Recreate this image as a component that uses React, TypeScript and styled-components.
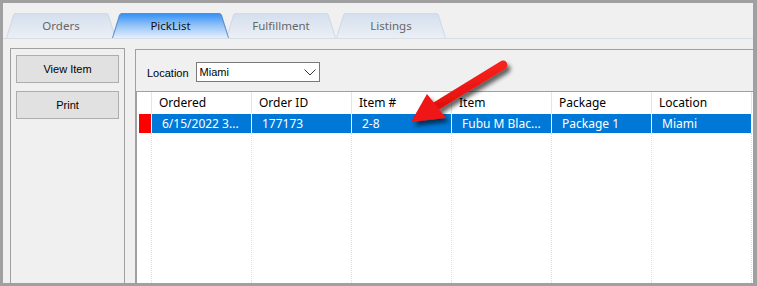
import React from "react";
import styled, { createGlobalStyle } from "styled-components";

const GlobalStyle = createGlobalStyle`
  html, body {
    margin: 0;
    padding: 0;
    background: #ffffff;
  }
  body {
    font-family: "Noto Sans", "Liberation Sans", sans-serif;
    font-size: 12px;
    color: #000;
  }
`;

// WinForms controls use the classic sans, the grid and tabs the newer UI face
const formFont = `"Liberation Sans", Arial, sans-serif`;

const tabs = ["Orders", "PickList", "Fulfillment", "Listings"];
const columns = ["Ordered", "Order ID", "Item #", "Item", "Package", "Location"];
const selectedRow = ["6/15/2022 3...", "177173", "2-8", "Fubu M Blac...", "Package 1", "Miami"];

const App: React.FC = () => {
  return (
    <Page>
      <GlobalStyle />
      <Frame>
        <TabStrip>
          {tabs.map((t) => (
            <Tab key={t} active={t === "PickList"}>
              {t}
            </Tab>
          ))}
        </TabStrip>

        <Body>
          <LeftPanel>
            <ActionButton>View Item</ActionButton>
            <ActionButton>Print</ActionButton>
          </LeftPanel>

          <RightPanel>
            <LocationRow>
              <LocationLabel>Location</LocationLabel>
              <Select>
                Miami
                <Chevron width="12" height="7" viewBox="0 0 12 7">
                  <path d="M0.5 0.5 L6 6 L11.5 0.5" fill="none" stroke="#333" strokeWidth="1" />
                </Chevron>
              </Select>
            </LocationRow>

            <Grid>
              <GridRow>
                <HeaderCell />
                {columns.map((c) => (
                  <HeaderCell key={c}>{c}</HeaderCell>
                ))}
              </GridRow>
              <DataRow>
                <IndicatorCell>
                  <RowMarker />
                </IndicatorCell>
                {selectedRow.map((v, i) => (
                  <DataCell key={i}>
                    <CellText>{v}</CellText>
                  </DataCell>
                ))}
              </DataRow>
              <FillerRow>
                {Array.from({ length: 7 }).map((_, i) => (
                  <FillerCell key={i} />
                ))}
              </FillerRow>
            </Grid>
          </RightPanel>
        </Body>
      </Frame>

      <ArrowLayer viewBox="0 0 757 286" width="757" height="286">
        <defs>
          <filter id="arrowShadow" x="-30%" y="-30%" width="170%" height="170%">
            <feDropShadow dx="3" dy="4" stdDeviation="2.2" floodColor="#000" floodOpacity="0.6" />
          </filter>
          <linearGradient id="arrowRed" x1="0" y1="0" x2="0.3" y2="1">
            <stop offset="0" stopColor="#ff2a22" />
            <stop offset="1" stopColor="#e00c0c" />
          </linearGradient>
        </defs>
        <g filter="url(#arrowShadow)">
          <line x1="503" y1="65" x2="433" y2="108" stroke="url(#arrowRed)" strokeWidth="9" strokeLinecap="round" />
          <polygon points="411,122 427,94 446,118" fill="#ee1414" />
        </g>
      </ArrowLayer>
    </Page>
  );
};

export default App;

const Page = styled.div`
  position: relative;
  width: 757px;
  height: 286px;
`;

const Frame = styled.div`
  box-sizing: border-box;
  width: 100%;
  height: 100%;
  border: 3px solid #a0a0a0;
  border-right-width: 4px;
  background: #f0f0f0;
  display: flex;
  flex-direction: column;
  overflow: hidden;
`;

const TabStrip = styled.div`
  display: flex;
  align-items: flex-end;
  height: 35px;
  padding-left: 3px;
  border-bottom: 1px solid #d6dee8;
  flex-shrink: 0;
`;

const trapezoid = "polygon(0 100%, 7px 2px, 9px 0, calc(100% - 9px) 0, calc(100% - 7px) 2px, 100% 100%)";

const Tab = styled.div<{ active: boolean }>`
  position: relative;
  z-index: ${(p) => (p.active ? 2 : 0)};
  box-sizing: border-box;
  width: ${(p) => (p.active ? "117px" : "110px")};
  margin: ${(p) => (p.active ? "0 -3px 0 -4px" : "0")};
  height: 25px;
  display: flex;
  align-items: center;
  justify-content: center;
  font-size: 11.5px;
  color: ${(p) => (p.active ? "#111" : "#666")};

  &::before {
    content: "";
    position: absolute;
    inset: 0;
    z-index: -1;
    background: ${(p) => (p.active ? "#5b8ecf" : "#d2dae6")};
    clip-path: ${trapezoid};
  }

  &::after {
    content: "";
    position: absolute;
    inset: 1px 1px 0 1px;
    z-index: -1;
    background: ${(p) =>
      p.active
        ? "linear-gradient(to bottom, #3592f6 0%, #8fc0f7 45%, #e4effc 100%)"
        : "linear-gradient(to bottom, #d4dfee 0%, #e3e9f2 60%, #ebeff5 100%)"};
    clip-path: ${trapezoid};
  }
`;

const Body = styled.div`
  flex: 1;
  display: flex;
  gap: 10px;
  padding: 9px 0 0 7px;
  min-height: 0;
`;

const LeftPanel = styled.div`
  box-sizing: border-box;
  width: 115px;
  border: 1px solid #a0a0a0;
  border-bottom: none;
  padding: 6px 5px 0 5px;
  display: flex;
  flex-direction: column;
  gap: 8px;
`;

const ActionButton = styled.button`
  box-sizing: border-box;
  height: 28px;
  width: 100%;
  border: 1px solid #adadad;
  border-radius: 0;
  background: #e1e1e1;
  font-family: ${formFont};
  font-size: 11px;
  color: #000;
  padding: 0;
`;

const RightPanel = styled.div`
  flex: 1;
  margin-top: 1px;
  border-top: 1px solid #a0a0a0;
  border-left: 1px solid #a0a0a0;
  display: flex;
  flex-direction: column;
  min-width: 0;
`;

const LocationRow = styled.div`
  display: flex;
  align-items: center;
  gap: 7px;
  padding: 12px 0 0 11px;
  font-family: ${formFont};
  font-size: 11px;
`;

const LocationLabel = styled.span`
  color: #000;
  padding-top: 2px;
`;

const Select = styled.div`
  box-sizing: border-box;
  width: 124px;
  height: 20px;
  border: 1px solid #7a7a7a;
  background: #fff;
  display: flex;
  align-items: center;
  padding: 0 3px 0 3px;
`;

const Chevron = styled.svg`
  margin-left: auto;
`;

const Grid = styled.div`
  flex: 1;
  margin-top: 9px;
  border-top: 1px solid #a0a0a0;
  border-left: 1px solid #a0a0a0;
  background: #fff;
  display: flex;
  flex-direction: column;
`;

const GridRow = styled.div`
  display: grid;
  grid-template-columns: 15px repeat(6, 100px);
  height: 22px;
`;

const HeaderCell = styled.div`
  box-sizing: border-box;
  border-right: 1px solid #e5e5e5;
  padding-left: 7px;
  line-height: 22px;
  white-space: nowrap;
  overflow: hidden;
`;

const DataRow = styled(GridRow)`
  height: 19px;
`;

const IndicatorCell = styled.div`
  box-sizing: border-box;
  border-right: 1px solid #fff;
  padding-left: 2px;
  display: flex;
`;

const RowMarker = styled.div`
  flex: 1;
  background: #ff0000;
`;

const DataCell = styled.div`
  box-sizing: border-box;
  min-width: 0;
  background: #0078d7;
  color: #fff;
  border-right: 1px solid #fff;
  overflow: hidden;
`;

const CellText = styled.span`
  display: block;
  margin-left: 10px;
  line-height: 19px;
  white-space: nowrap;
  text-align: left;
`;

const FillerRow = styled(GridRow)`
  flex: 1;
  height: auto;
`;

const FillerCell = styled.div`
  box-sizing: border-box;
  border-right: 1px dotted #dedede;
`;

const ArrowLayer = styled.svg`
  position: absolute;
  left: 0;
  top: 0;
  pointer-events: none;
`;
